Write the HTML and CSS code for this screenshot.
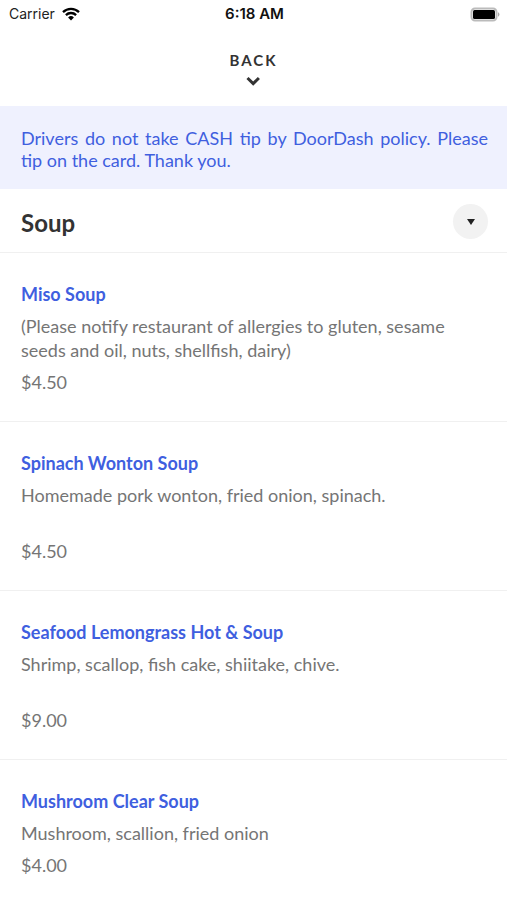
FILE: index.html
```html
<!DOCTYPE html>
<html lang="en">
<head>
<meta charset="utf-8">
<meta name="viewport" content="width=device-width, initial-scale=1">
<title>Menu</title>
<link rel="stylesheet" href="styles.css">
</head>
<body>
<div class="status">
  <div class="carrier">Carrier
    <svg width="18" height="14" viewBox="0 0 18 14" aria-hidden="true"><path d="M1 5.2a11.5 11.5 0 0 1 16 0M3.9 8.1a7.3 7.3 0 0 1 10.2 0" fill="none" stroke="#000" stroke-width="2.3"/><path d="M9 13.6 6.1 10.5a4.2 4.2 0 0 1 5.8 0z"/></svg>
  </div>
  <div class="clock">6:18 AM</div>
  <div class="battery">
    <svg width="30" height="15" viewBox="0 0 30 15" aria-hidden="true"><rect x="1.5" y="1.5" width="25" height="12" rx="3.5" fill="none" stroke="#bbb" stroke-width="2"/><rect x="3" y="3" width="22" height="9" rx="1.5"/><path d="M28 5.3a2.4 2.4 0 0 1 0 4.4z" fill="#aaa"/></svg>
  </div>
</div>
<button class="back" type="button">BACK
  <svg width="16" height="10" viewBox="0 0 16 10" aria-hidden="true"><path d="m1.5 2 5.7 5.6L12.9 2" fill="none" stroke="#333" stroke-width="3"/></svg>
</button>
<main>
  <p class="notice">Drivers do not take CASH tip by DoorDash policy. Please tip on the card. Thank you.</p>
  <header class="section">
    <h1>Soup</h1>
    <button class="toggle" type="button" aria-label="Choose section"><svg width="8" height="6" viewBox="0 0 8 6" aria-hidden="true"><path d="M0 0h8L4 6z" fill="#222"/></svg></button>
  </header>
  <ul class="menu">
    <li><h2>Miso Soup</h2><p class="desc">(Please notify restaurant of allergies to gluten, sesame seeds and oil, nuts, shellfish, dairy)</p><p class="price">$4.50</p></li>
    <li><h2>Spinach Wonton Soup</h2><p class="desc">Homemade pork wonton, fried onion, spinach.</p><p class="price">$4.50</p></li>
    <li><h2>Seafood Lemongrass Hot &amp; Soup</h2><p class="desc">Shrimp, scallop, fish cake, shiitake, chive.</p><p class="price">$9.00</p></li>
    <li class="short"><h2>Mushroom Clear Soup</h2><p class="desc">Mushroom, scallion, fried onion</p><p class="price">$4.00</p></li>
  </ul>
</main>
</body>
</html>
```
FILE: styles.css
```css
* { box-sizing: border-box; }
body, h1, h2, p, ul { margin: 0; padding: 0; }
body { background: #fff; font-family: Lato, sans-serif; color: #757575; }
button { border: 0; padding: 0; font-family: inherit; }
svg { display: block; }
.status { display: grid; grid-template-columns: 1fr auto 1fr; align-items: center; padding: 4px 7px 0 9px; font: 14px/20px Inter, sans-serif; color: #222; }
.carrier { display: flex; align-items: center; gap: 7px; }
.clock { font-size: 15px; font-weight: 600; color: #111; }
.battery { justify-self: end; }
.back { display: flex; flex-direction: column; align-items: center; gap: 6px; width: 100%; padding: 27px 0 20px; background: none; color: #333; font-size: 15px; line-height: 19px; font-weight: 700; letter-spacing: 2px; }
.notice { padding: 21px 19px 18px 21px; background: #eff1fe; color: #3f5fdf; font-size: 18px; line-height: 22px; text-align: justify; }
.section { display: flex; justify-content: space-between; align-items: center; padding: 15px 19px 13px 21px; border-bottom: 1px solid #f0f0f0; }
.section h1 { padding-top: 2px; color: #333; font-size: 24px; line-height: 32px; }
.toggle { display: grid; place-items: center; width: 35px; height: 35px; border-radius: 50%; background: #f2f2f2; }
.menu { list-style: none; }
.menu li { padding: 29px 21px 27px; border-bottom: 1px solid #f0f0f0; }
.menu h2 { margin-bottom: 8px; color: #3f5fdf; font-size: 18px; line-height: 24px; }
.desc { min-height: 48px; font-size: 18px; line-height: 24px; }
.price { margin-top: 8px; font-size: 18px; line-height: 24px; }
.menu .short { border-bottom: 0; }
.short .desc { min-height: 24px; }
```
